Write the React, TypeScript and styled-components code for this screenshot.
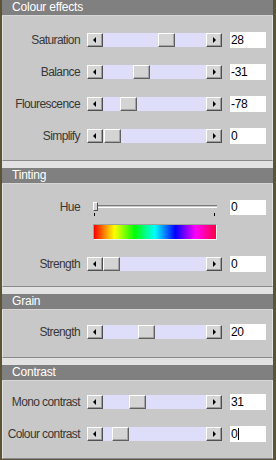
import React from 'react';
import styled, { createGlobalStyle } from 'styled-components';

const GlobalStyle = createGlobalStyle`
  html, body {
    margin: 0;
    padding: 0;
    background: #5c5234;
  }
  body {
    font-family: "Liberation Sans", Arial, sans-serif;
  }
`;

interface SliderRowData {
  label: string;
  value: string;
  position: number;
  caret?: boolean;
}

const colourEffects: SliderRowData[] = [
  { label: 'Saturation', value: '28', position: 55 / 85 },
  { label: 'Balance', value: '-31', position: 30 / 85 },
  { label: 'Flourescence', value: '-78', position: 17 / 85 },
  { label: 'Simplify', value: '0', position: 1 / 85 },
];

const contrast: SliderRowData[] = [
  { label: 'Mono contrast', value: '31', position: 26 / 85 },
  { label: 'Colour contrast', value: '0', position: 9 / 85, caret: true },
];

const TRAVEL = 85;

const ScrollSlider: React.FC<{ position: number }> = ({ position }) => (
  <Slider>
    <ArrowButton>
      <Arrow $dir="left" />
    </ArrowButton>
    <Track>
      <Thumb style={{ left: Math.round(position * TRAVEL) }} />
    </Track>
    <ArrowButton>
      <Arrow $dir="right" />
    </ArrowButton>
  </Slider>
);

const SliderRow: React.FC<SliderRowData> = ({ label, value, position, caret }) => (
  <Row>
    <Label>{label}</Label>
    <ScrollSlider position={position} />
    <Value>
      {value}
      {caret && <Caret />}
    </Value>
  </Row>
);

const App: React.FC = () => {
  return (
    <Frame>
      <GlobalStyle />
      <Section>
        <Header>Colour effects</Header>
        <Body $pt={16} $pb={16}>
          {colourEffects.map((r) => (
            <SliderRow key={r.label} {...r} />
          ))}
        </Body>
      </Section>
      <Spacer />
      <Section>
        <Header>Tinting</Header>
        <Body $pt={16} $pb={14}>
          <HueBlock>
            <HueRow>
              <Label>Hue</Label>
              <HueSlider>
                <HueLine />
                <HueThumb />
                <Ticks>
                  <Tick />
                  <Tick />
                </Ticks>
              </HueSlider>
              <Value $h={15}>0</Value>
            </HueRow>
            <ColourBar />
          </HueBlock>
          <SliderRow label="Strength" value="0" position={0} />
        </Body>
      </Section>
      <Spacer />
      <Section>
        <Header>Grain</Header>
        <Body $pt={14} $pb={17}>
          <SliderRow label="Strength" value="20" position={35 / 85} />
        </Body>
      </Section>
      <Spacer />
      <Section>
        <Header>Contrast</Header>
        <Body $pt={13} $pb={16}>
          {contrast.map((r) => (
            <SliderRow key={r.label} {...r} />
          ))}
        </Body>
      </Section>
    </Frame>
  );
};

const Frame = styled.div`
  width: 276px;
  height: 460px;
  box-sizing: border-box;
  padding: 0 3px 2px 2px;
  background: #5c5234;
  overflow: hidden;
`;

const Section = styled.section`
  display: flex;
  flex-direction: column;
`;

const Header = styled.div`
  height: 15px;
  line-height: 15px;
  padding-left: 10px;
  background: #808080;
  color: #ffffff;
  font-size: 12px;
  letter-spacing: -0.2px;
  border-bottom: 1px solid #d6d6d6;
`;

const Body = styled.div<{ $pt: number; $pb: number }>`
  display: flex;
  flex-direction: column;
  gap: 16px;
  padding: ${(p) => p.$pt}px 0 ${(p) => p.$pb}px;
  background: #c8c8c8;
  border-left: 1px solid #e2e2e2;
  border-right: 1px solid #e2e2e2;
  border-bottom: 1px solid #8a8a8a;
`;

const Spacer = styled.div`
  height: 7px;
  background: #e2e2e2;
`;

const Row = styled.div`
  display: flex;
  align-items: center;
  height: 16px;
`;

const Label = styled.span`
  width: 77px;
  flex-shrink: 0;
  text-align: right;
  font-size: 12px;
  letter-spacing: -0.6px;
  color: #383838;
  white-space: nowrap;
`;

const Slider = styled.div`
  display: flex;
  width: 135px;
  height: 14px;
  margin-left: 7px;
`;

const ArrowButton = styled.div`
  width: 16px;
  height: 14px;
  box-sizing: border-box;
  display: flex;
  align-items: center;
  justify-content: center;
  background: #d6d6d6;
  border: 1px solid;
  border-color: #ffffff #505050 #505050 #ffffff;
  box-shadow: inset -1px -1px 0 #9a9a9a;
`;

const Arrow = styled.span<{ $dir: 'left' | 'right' }>`
  width: 0;
  height: 0;
  border-top: 3px solid transparent;
  border-bottom: 3px solid transparent;
  ${(p) =>
    p.$dir === 'left'
      ? 'border-right: 3px solid #000; margin-right: 1px;'
      : 'border-left: 3px solid #000; margin-left: 1px;'}
`;

const Track = styled.div`
  position: relative;
  flex: 1;
  background: #dedefa;
`;

const Thumb = styled.div`
  position: absolute;
  top: 0;
  width: 17px;
  height: 14px;
  box-sizing: border-box;
  background: #d4d4d4;
  border: 1px solid;
  border-color: #ffffff #606060 #606060 #ffffff;
  box-shadow: inset -1px -1px 0 #a4a4a4;
`;

const Value = styled.div<{ $h?: number }>`
  display: flex;
  align-items: center;
  width: 36px;
  height: ${(p) => p.$h ?? 16}px;
  margin-left: 8px;
  padding-left: 1px;
  box-sizing: border-box;
  background: #ffffff;
  color: #000000;
  font-size: 12px;
  letter-spacing: -0.3px;
`;

const Caret = styled.span`
  display: inline-block;
  width: 1px;
  height: 12px;
  margin-left: 1px;
  background: #000000;
`;

const HueBlock = styled.div`
  display: flex;
  flex-direction: column;
  gap: 6px;
`;

const HueRow = styled.div`
  display: flex;
  align-items: flex-start;
  height: 18px;
  line-height: 15px;
`;

const HueSlider = styled.div`
  position: relative;
  display: flex;
  flex-direction: column;
  width: 135px;
  height: 18px;
  margin-left: 7px;
  padding: 5px 5px 0 6px;
  box-sizing: border-box;
`;

const HueLine = styled.div`
  height: 1px;
  border-top: 1px solid #7a7a7a;
  border-bottom: 1px solid #ffffff;
`;

const HueThumb = styled.div`
  position: absolute;
  left: 6px;
  top: 2px;
  width: 5px;
  height: 9px;
  box-sizing: border-box;
  background: #d4d4d4;
  border: 1px solid;
  border-color: #ffffff #505050 #505050 #ffffff;
`;

const Ticks = styled.div`
  display: flex;
  justify-content: space-between;
  margin-top: 5px;
  padding: 0 2px 0 1px;
`;

const Tick = styled.span`
  width: 1px;
  height: 3px;
  background: #000000;
`;

const ColourBar = styled.div`
  width: 124px;
  height: 16px;
  margin-left: 90px;
  box-sizing: border-box;
  border: 1px solid;
  border-color: #a0a0a0 #f4f4f4 #f4f4f4 #a0a0a0;
  background: linear-gradient(
    to right,
    #ff0000 0%,
    #ffff00 16.6%,
    #00ff00 33.3%,
    #00ffff 50%,
    #0000ff 66.6%,
    #ff00ff 83.3%,
    #ff0040 100%
  );
`;

export default App;
